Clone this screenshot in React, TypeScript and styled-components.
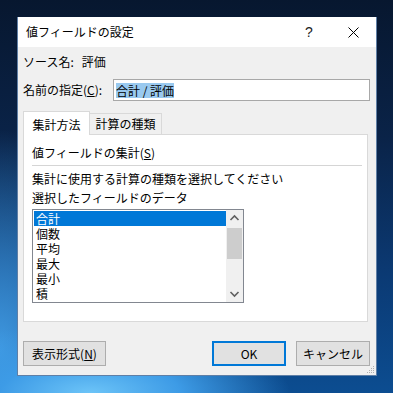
import React from "react";
import styled, { createGlobalStyle } from "styled-components";

const GlobalStyle = createGlobalStyle`
  html, body {
    margin: 0;
    padding: 0;
  }
  body {
    width: 393px;
    height: 393px;
    overflow: hidden;
    font-family: "Noto Sans CJK JP", "Noto Sans", sans-serif;
    font-size: 12px;
    color: #000;
  }
`;

const Desktop = styled.div`
  width: 393px;
  height: 393px;
  box-sizing: border-box;
  padding: 17px 16px 17px 17px;
  background:
    radial-gradient(ellipse 200px 70px at 90px 393px, #6cc4f8 0%, #3d9be6 45%, rgba(40, 120, 210, 0) 100%),
    radial-gradient(ellipse 120px 220px at 0px 350px, #3f98e0 0%, rgba(30, 100, 190, 0) 100%),
    linear-gradient(180deg, #07172f 0%, #0a2348 35%, #0b3a74 70%, #0c4d91 100%);
`;

const Dialog = styled.div`
  width: 360px;
  height: 359px;
  box-sizing: border-box;
  display: flex;
  flex-direction: column;
  background: #f0f0f0;
  border: 1px solid #5f7fa6;
  border-top: none;
  position: relative;
`;

const TitleBar = styled.div`
  height: 30px;
  flex: none;
  display: flex;
  align-items: center;
  background: #fff;
  padding-left: 8px;
`;

const Title = styled.div`
  flex: 1;
  line-height: 16px;
`;

const HelpGlyph = styled.div`
  width: 14px;
  text-align: center;
  font-family: "Liberation Sans", sans-serif;
  font-size: 14px;
  color: #222;
  margin-right: 32px;
`;

const CloseGlyph = styled.svg`
  width: 11px;
  height: 11px;
  margin-right: 17px;
`;

const Body = styled.div`
  flex: 1;
  display: flex;
  flex-direction: column;
  padding: 0 6px 9px 5px;
`;

const InfoRow = styled.div`
  margin-top: 7px;
  line-height: 16px;
  display: flex;
  gap: 8px;
`;

const NameRow = styled.div`
  margin-top: 9px;
  display: flex;
  align-items: center;
`;

const Label = styled.div`
  width: 90px;
  line-height: 16px;
`;

const Accel = styled.span`
  text-decoration: underline;
`;

const TextBox = styled.div`
  flex: 1;
  height: 22px;
  box-sizing: border-box;
  border: 1px solid #a8a8a8;
  background: #fff;
  display: flex;
  align-items: center;
  padding-left: 2px;
`;

const Selected = styled.span`
  background: #99c9ef;
  line-height: 15px;
`;

const TabStrip = styled.div`
  margin-top: 10px;
  height: 24px;
  display: flex;
  align-items: flex-end;
  position: relative;
  z-index: 1;
`;

const Tab = styled.div<{ $active?: boolean }>`
  box-sizing: border-box;
  height: ${(p) => (p.$active ? 24 : 22)}px;
  width: ${(p) => (p.$active ? 67 : 72)}px;
  border: 1px solid #d9d9d9;
  border-bottom: ${(p) => (p.$active ? "none" : "1px solid #d9d9d9")};
  border-left: ${(p) => (p.$active ? "1px solid #d9d9d9" : "none")};
  background: ${(p) => (p.$active ? "#fff" : "#f0f0f0")};
  display: flex;
  align-items: center;
  justify-content: center;
  line-height: 16px;
  padding-top: ${(p) => (p.$active ? 2 : 0)}px;
`;

const Panel = styled.div`
  margin-top: -1px;
  margin-right: 2px;
  height: 188px;
  box-sizing: border-box;
  border: 1px solid #d9d9d9;
  background: #fff;
  padding: 10px 5px 0 8px;
  display: flex;
  flex-direction: column;
`;

const Line = styled.div<{ $gap?: number }>`
  line-height: 16px;
  margin-top: ${(p) => p.$gap ?? 0}px;
`;

const Separator = styled.div`
  margin-top: 4px;
  height: 1px;
  background: #d5d5d5;
`;

const ListBox = styled.div`
  margin-top: 3px;
  width: 212px;
  height: 94px;
  box-sizing: border-box;
  border: 1px solid #828790;
  display: flex;
  background: #fff;
`;

const Items = styled.div`
  flex: 1;
  padding: 1px 0 0 1px;
`;

const Item = styled.div<{ $selected?: boolean }>`
  height: 15px;
  line-height: 15px;
  overflow: hidden;
  padding-left: 2px;
  background: ${(p) => (p.$selected ? "#0078d7" : "transparent")};
  color: ${(p) => (p.$selected ? "#fff" : "#000")};
`;

const ScrollBar = styled.div`
  width: 17px;
  background: #f0f0f0;
  display: flex;
  flex-direction: column;
  align-items: center;
`;

const Arrow = styled.svg`
  width: 17px;
  height: 17px;
  flex: none;
`;

const Thumb = styled.div`
  width: 15px;
  height: 31px;
  background: #cdcdcd;
  margin-top: 1px;
`;

const Track = styled.div`
  flex: 1;
`;

const ButtonRow = styled.div`
  margin-top: auto;
  display: flex;
  align-items: center;
  gap: 10px;
`;

const Button = styled.div<{ $default?: boolean; $width: number }>`
  width: ${(p) => p.$width}px;
  height: 25px;
  box-sizing: border-box;
  border: ${(p) => (p.$default ? "2px solid #0078d7" : "1px solid #adadad")};
  background: #e1e1e1;
  display: flex;
  align-items: center;
  justify-content: center;
  line-height: 16px;
`;

const Spacer = styled.div`
  flex: 1;
`;

const Grip = styled.svg`
  position: absolute;
  right: 1px;
  bottom: 1px;
  width: 10px;
  height: 10px;
`;

const items = ["合計", "個数", "平均", "最大", "最小", "積"];

export default function App() {
  return (
    <>
      <GlobalStyle />
      <Desktop>
        <Dialog>
          <TitleBar>
            <Title>値フィールドの設定</Title>
            <HelpGlyph>?</HelpGlyph>
            <CloseGlyph viewBox="0 0 11 11">
              <path d="M0.5 0.5 L10.5 10.5 M10.5 0.5 L0.5 10.5" stroke="#000" strokeWidth="1" />
            </CloseGlyph>
          </TitleBar>
          <Body>
            <InfoRow>
              <span>ソース名:</span>
              <span>評価</span>
            </InfoRow>
            <NameRow>
              <Label>
                名前の指定(<Accel>C</Accel>):
              </Label>
              <TextBox>
                <Selected>合計 / 評価</Selected>
              </TextBox>
            </NameRow>
            <TabStrip>
              <Tab $active>集計方法</Tab>
              <Tab>計算の種類</Tab>
            </TabStrip>
            <Panel>
              <Line>
                値フィールドの集計(<Accel>S</Accel>)
              </Line>
              <Separator />
              <Line $gap={5}>集計に使用する計算の種類を選択してください</Line>
              <Line $gap={3}>選択したフィールドのデータ</Line>
              <ListBox>
                <Items>
                  {items.map((name, i) => (
                    <Item key={name} $selected={i === 0}>
                      {name}
                    </Item>
                  ))}
                </Items>
                <ScrollBar>
                  <Arrow viewBox="0 0 17 17">
                    <path d="M4.5 10 L8.5 6 L12.5 10" fill="none" stroke="#606060" strokeWidth="1.6" />
                  </Arrow>
                  <Thumb />
                  <Track />
                  <Arrow viewBox="0 0 17 17">
                    <path d="M4.5 7 L8.5 11 L12.5 7" fill="none" stroke="#606060" strokeWidth="1.6" />
                  </Arrow>
                </ScrollBar>
              </ListBox>
            </Panel>
            <ButtonRow>
              <Button $width={83}>
                表示形式(<Accel>N</Accel>)
              </Button>
              <Spacer />
              <Button $width={74} $default>
                OK
              </Button>
              <Button $width={74}>キャンセル</Button>
            </ButtonRow>
          </Body>
          <Grip viewBox="0 0 10 10">
            <g fill="#b0b0b0">
              <rect x="8" y="2" width="1" height="1" />
              <rect x="6" y="4" width="1" height="1" />
              <rect x="8" y="4" width="1" height="1" />
              <rect x="4" y="6" width="1" height="1" />
              <rect x="6" y="6" width="1" height="1" />
              <rect x="8" y="6" width="1" height="1" />
              <rect x="2" y="8" width="1" height="1" />
              <rect x="4" y="8" width="1" height="1" />
              <rect x="6" y="8" width="1" height="1" />
              <rect x="8" y="8" width="1" height="1" />
            </g>
          </Grip>
        </Dialog>
      </Desktop>
    </>
  );
}
